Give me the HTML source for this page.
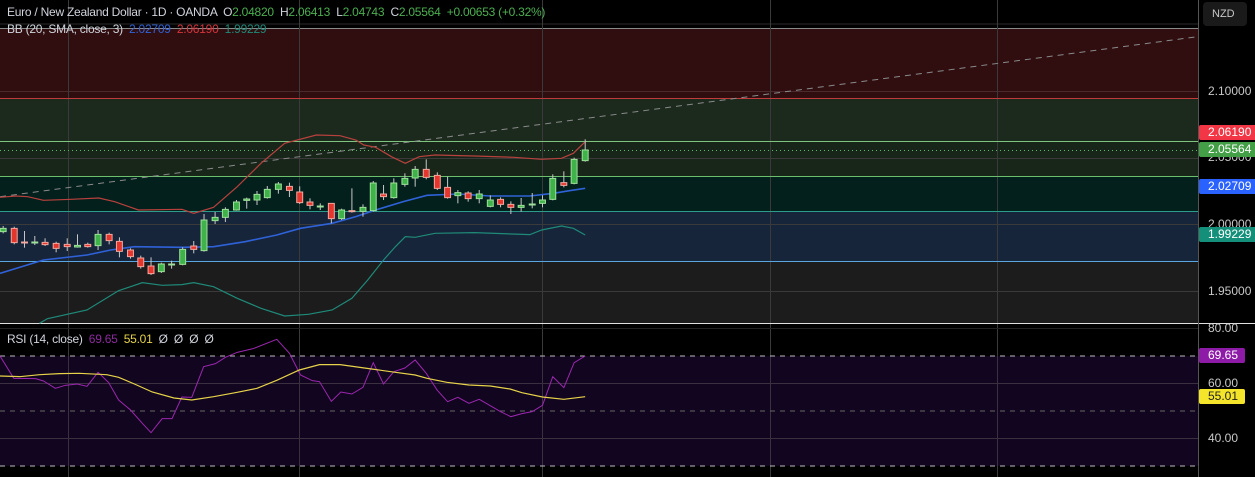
<!DOCTYPE html>
<html><head><meta charset="utf-8"><style>
body{margin:0;width:1255px;height:477px;overflow:hidden;background:#000;font-family:"Liberation Sans",sans-serif;}
.t{position:absolute;white-space:nowrap;font-size:12px;letter-spacing:-0.25px;color:#d1d4dc}
.ax{position:absolute;left:1208px;font-size:12px;color:#c8c8c8}
.lb{position:absolute;left:1199px;width:56px;height:15px;font-size:12px;color:#fff;padding-left:9px;box-sizing:border-box;line-height:15px;border-radius:2px 0 0 2px}
</style></head><body>
<svg width="1255" height="477" style="position:absolute;left:0;top:0">
<rect x="0" y="0" width="1198" height="477" fill="#000"/>
<line x1="0" y1="24" x2="1198" y2="24" stroke="#2a2a2a"/>
<line x1="0" y1="28.5" x2="1198" y2="28.5" stroke="#8a8a8a"/>
<rect x="0" y="29" width="1198" height="69" fill="#300e10"/>
<rect x="0" y="99" width="1198" height="42" fill="#1c2a1e"/>
<rect x="0" y="142" width="1198" height="34" fill="#18261a"/>
<rect x="0" y="177" width="1198" height="34" fill="#03201c"/>
<rect x="0" y="212" width="1198" height="49" fill="#16253a"/>
<rect x="0" y="262" width="1198" height="61" fill="#1c1c1d"/>
<g stroke="#3a3a3a" stroke-width="1">
<line x1="0" y1="91.5" x2="1198" y2="91.5" stroke="#4a2a2c"/>
<line x1="0" y1="158.5" x2="1198" y2="158.5"/>
<line x1="0" y1="224.5" x2="1198" y2="224.5"/>
<line x1="0" y1="291.5" x2="1198" y2="291.5"/>
<line x1="68.5" y1="0" x2="68.5" y2="477"/>
<line x1="299.5" y1="0" x2="299.5" y2="477"/>
<line x1="542.5" y1="0" x2="542.5" y2="477"/>
<line x1="770.5" y1="0" x2="770.5" y2="477"/>
<line x1="997.5" y1="0" x2="997.5" y2="477"/>
</g>
<line x1="0" y1="98.5" x2="1198" y2="98.5" stroke="#c23b3b"/>
<line x1="0" y1="141.5" x2="1198" y2="141.5" stroke="#7ec47e"/>
<line x1="0" y1="150.5" x2="1198" y2="150.5" stroke="#5fb56a" stroke-dasharray="1 3"/>
<line x1="0" y1="176.5" x2="1198" y2="176.5" stroke="#6cbf6c"/>
<line x1="0" y1="211.5" x2="1198" y2="211.5" stroke="#2e9c8a"/>
<line x1="0" y1="261.5" x2="1198" y2="261.5" stroke="#5aa6e0"/>
<line x1="0" y1="196.7" x2="1195" y2="37" stroke="#8a8a8a" stroke-dasharray="6 5"/>
<line x1="0" y1="323.5" x2="1255" y2="323.5" stroke="#e0e0e0"/>
<line x1="0" y1="328.5" x2="1198" y2="328.5" stroke="#222"/>
<rect x="0" y="356" width="1198" height="110" fill="#12051f"/>
<g stroke="#3a3040"><line x1="0" y1="383.5" x2="1198" y2="383.5"/><line x1="0" y1="438.5" x2="1198" y2="438.5"/>
<line x1="68.5" y1="356" x2="68.5" y2="466"/><line x1="299.5" y1="356" x2="299.5" y2="466"/><line x1="542.5" y1="356" x2="542.5" y2="466"/><line x1="770.5" y1="356" x2="770.5" y2="466"/><line x1="997.5" y1="356" x2="997.5" y2="466"/></g>
<line x1="0" y1="356" x2="1198" y2="356" stroke="#bbb" stroke-dasharray="5 5"/>
<line x1="0" y1="411" x2="1198" y2="411" stroke="#666" stroke-dasharray="5 5"/>
<line x1="0" y1="466" x2="1198" y2="466" stroke="#bbb" stroke-dasharray="5 5"/>
<line x1="1198.5" y1="0" x2="1198.5" y2="477" stroke="#555"/>
<g transform="translate(0,120) scale(0.3954,0.3333)" fill="none" stroke-width="1.2">
<polyline vector-effect="non-scaling-stroke" stroke="#b8413d" points="0,232 40,228 70,230 110,241 180,238 250,234 290,245 350,270 460,268 490,280 540,262 600,200 660,130 720,70 800,45 860,47 900,60 920,75 950,82 990,110 1025,130 1060,110 1100,105 1200,108 1300,112 1370,118 1420,115 1450,100 1480,65"/>
<polyline vector-effect="non-scaling-stroke" stroke="#2f62d8" stroke-width="1.6" points="0,460 110,420 220,405 280,390 340,380 460,382 540,380 620,365 700,345 760,325 840,310 900,290 950,270 1020,245 1080,226 1160,222 1240,228 1340,228 1400,220 1440,212 1480,205"/>
<polyline vector-effect="non-scaling-stroke" stroke="#1f8a78" points="100,610 120,596 220,570 300,512 360,488 410,496 460,494 490,488 540,500 600,535 660,565 720,588 780,583 840,570 890,535 930,480 970,420 1000,380 1025,350 1050,352 1100,340 1200,338 1340,344 1370,330 1420,318 1450,325 1480,345"/>
</g>
<g id="c" transform="translate(0,120) scale(0.3954,0.3333)"></g>
<g transform="translate(0,320) scale(0.3954,0.3333)" fill="none">
<polyline vector-effect="non-scaling-stroke" stroke="#9c27b0" stroke-width="1" points="0,108 35,175 90,176 110,183 140,205 165,196 195,192 220,199 248,157 275,188 300,240 330,270 360,310 382,338 410,296 435,296 460,231 485,232 515,140 545,131 570,112 600,97 640,86 700,58 732,100 760,165 790,182 808,185 838,244 862,216 890,222 918,202 944,128 970,192 996,155 1024,144 1050,120 1078,160 1106,211 1132,245 1158,232 1186,250 1212,238 1240,257 1266,275 1292,290 1320,281 1346,275 1372,256 1398,170 1426,203 1452,128 1480,108"/>
<polyline vector-effect="non-scaling-stroke" stroke="#e6d34a" stroke-width="1.2" points="0,168 50,170 100,164 150,161 200,160 270,164 300,172 340,192 385,216 440,234 485,240 540,230 600,217 650,205 700,181 757,150 808,134 860,134 940,147 1000,157 1050,165 1080,175 1130,187 1186,195 1240,198 1290,207 1320,218 1372,231 1426,238 1480,230"/>
</g>
</svg>
<script>
var d=[[8,325,335,318,340,1],[36,325,368,320,373,0],[62,366,369,333,383,0],[88,366,369,348,375,1],[114,367,374,355,378,0],[142,370,385,365,397,0],[170,373,380,355,393,0],[196,376,381,343,383,1],[222,373,380,368,383,0],[248,343,377,330,390,1],[276,343,362,338,373,0],[302,364,394,352,412,0],[330,390,410,385,416,0],[356,414,440,407,446,0],[382,438,461,412,465,0],[408,432,455,428,459,1],[434,432,434,422,446,1],[462,388,433,382,436,1],[490,378,388,363,400,0],[516,300,392,282,395,1],[544,292,302,276,312,1],[570,268,292,262,306,1],[598,246,270,240,272,1],[624,237,241,233,266,1],[650,223,240,213,255,1],[676,208,233,198,236,1],[704,192,208,186,221,1],[732,199,211,188,231,0],[758,216,248,199,252,0],[784,246,256,235,268,0],[810,258,260,250,270,1],[838,250,296,250,310,0],[864,270,296,266,300,1],[890,272,274,205,278,0],[918,262,274,253,290,1],[944,189,272,183,275,1],[970,222,230,195,240,0],[996,189,233,175,236,1],[1024,175,193,160,200,1],[1050,148,174,138,200,1],[1078,148,172,118,178,0],[1106,166,205,157,210,0],[1132,202,233,170,236,0],[1158,218,227,210,250,1],[1184,219,236,214,245,0],[1212,222,236,210,250,1],[1240,240,259,226,262,1],[1266,238,253,232,262,0],[1292,253,262,244,282,0],[1318,256,262,234,275,1],[1346,252,254,219,265,1],[1372,240,250,226,262,1],[1398,175,238,163,241,1],[1426,188,196,154,202,0],[1452,118,190,113,193,1],[1480,90,122,58,125,1]];
var s='';d.forEach(function(c){var f=c[5]?'#3fb24a':'#e4362c',st=c[5]?'#9fe09a':'#f4a8a0';
s+='<line vector-effect="non-scaling-stroke" x1="'+c[0]+'" x2="'+c[0]+'" y1="'+c[3]+'" y2="'+c[4]+'" stroke="#c8c8c8"/>';
s+='<rect vector-effect="non-scaling-stroke" x="'+(c[0]-7.5)+'" y="'+c[1]+'" width="15" height="'+Math.max(c[2]-c[1],3)+'" fill="'+f+'" stroke="'+st+'"/>';});
document.getElementById('c').innerHTML=s;
</script>
<div class="t" style="left:7px;top:5px">Euro / New Zealand Dollar · 1D · OANDA &nbsp;O<span style="color:#4caf50">2.04820</span> &nbsp;H<span style="color:#4caf50">2.06413</span> &nbsp;L<span style="color:#4caf50">2.04743</span> &nbsp;C<span style="color:#4caf50">2.05564</span> &nbsp;<span style="color:#4caf50">+0.00653 (+0.32%)</span></div>
<div class="t" style="left:7px;top:22px">BB (20, SMA, close, 3) &nbsp;<span style="color:#2f62d8">2.02709</span> &nbsp;<span style="color:#d8343c">2.06190</span> &nbsp;<span style="color:#1f8a78">1.99229</span></div>
<div class="t" style="left:7px;top:332px">RSI (14, close) &nbsp;<span style="color:#8e2aa0">69.65</span> &nbsp;<span style="color:#e6d34a">55.01</span> &nbsp;Ø &nbsp;Ø &nbsp;Ø &nbsp;Ø</div>
<div style="position:absolute;left:1203px;top:2px;width:44px;height:24px;background:#1a1a1a;border-radius:4px;color:#c8c8c8;font-size:11px;line-height:24px;padding-left:9px;box-sizing:border-box">NZD</div>
<div class="ax" style="top:84px">2.10000</div>
<div class="ax" style="top:150px">2.05000</div>
<div class="ax" style="top:217px">2.00000</div>
<div class="ax" style="top:284px">1.95000</div>
<div class="ax" style="top:321px">80.00</div>
<div class="ax" style="top:376px">60.00</div>
<div class="ax" style="top:431px">40.00</div>
<div class="lb" style="top:125px;background:#f23645">2.06190</div>
<div class="lb" style="top:142px;background:#43a047">2.05564</div>
<div class="lb" style="top:179px;background:#2962ff">2.02709</div>
<div class="lb" style="top:227px;background:#14907a">1.99229</div>
<div class="lb" style="top:348px;width:46px;background:#8e1ba8;border-radius:2px">69.65</div>
<div class="lb" style="top:389px;width:46px;background:#f5e52a;color:#222;border-radius:2px">55.01</div>
</body></html>
